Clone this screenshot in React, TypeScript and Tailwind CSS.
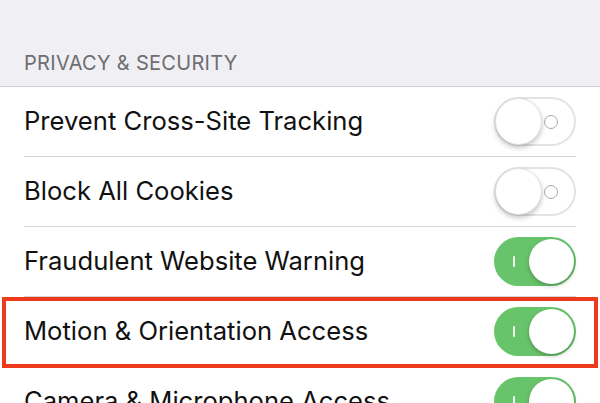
import React from "react";

function Toggle({ on }: { on: boolean }) {
  if (on) {
    return (
      <div className="flex items-center justify-between w-[82px] h-[49px] rounded-full bg-[#68c46b] pl-[19px] pr-[2px] shrink-0">
        <div className="w-[2px] h-[11px] bg-white/90 rounded" />
        <div className="w-[45px] h-[45px] rounded-full bg-white shadow-[0_2px_4px_rgba(0,0,0,0.25)]" />
      </div>
    );
  }
  return (
    <div className="flex items-center justify-between w-[82px] h-[49px] rounded-full bg-white border-2 border-[#e3e3e3] pr-[16px] shrink-0">
      <div className="w-[47px] h-[47px] -ml-[1px] rounded-full bg-white border border-[#dedede] shadow-[0_3px_5px_rgba(0,0,0,0.22)]" />
      <div className="w-[14px] h-[14px] rounded-full border-[1.5px] border-[#a8a8a8]" />
    </div>
  );
}

function Row({ label, on, highlight }: { label: string; on: boolean; highlight?: boolean }) {
  return (
    <div className="relative flex items-center h-[70px] pl-[24px] pr-[24px]">
      <div className="flex flex-1 items-center h-full border-b border-[#d4d3d8]">
        <span className="flex-1 text-[25.6px] text-[#111] whitespace-nowrap">{label}</span>
        <Toggle on={on} />
      </div>
      {highlight && (
        <div className="absolute left-[2px] right-[2px] top-[0px] bottom-[-1px] border-[4px] border-[#ee3a1c]" />
      )}
    </div>
  );
}

export default function App() {
  return (
    <div
      className="w-[600px] h-[403px] overflow-hidden bg-white"
      style={{ fontFamily: "Inter, 'Liberation Sans', sans-serif" }}
    >
      <div className="h-[87px] bg-[#efeff4] border-b border-[#cfced3] flex items-end pl-[24px] pb-[8px]">
        <span className="text-[20px] text-[#6d6d72] tracking-[0.3px]">PRIVACY &amp; SECURITY</span>
      </div>
      <Row label="Prevent Cross-Site Tracking" on={false} />
      <Row label="Block All Cookies" on={false} />
      <Row label="Fraudulent Website Warning" on={true} />
      <Row label="Motion & Orientation Access" on={true} highlight />
      <Row label="Camera & Microphone Access" on={true} />
    </div>
  );
}
